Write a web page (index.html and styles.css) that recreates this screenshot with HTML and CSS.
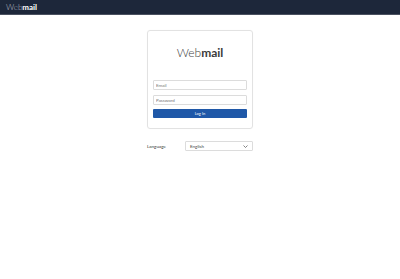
FILE: index.html
```html
<!DOCTYPE html>
<html>
<head>
<meta charset="utf-8">
<link rel="stylesheet" href="styles.css">
</head>
<body>
<header class="topbar">
  <div class="brand"><span class="light">Web</span><span class="bold">mail</span></div>
</header>
<main class="main">
  <div class="card">
    <h1 class="title"><span class="light">Web</span><span class="bold">mail</span></h1>
    <form class="form">
      <input class="field" type="text" placeholder="Email">
      <input class="field" type="password" placeholder="Password">
      <button class="btn" type="button">Log In</button>
    </form>
  </div>
  <div class="lang">
    <span class="lang-label">Language</span>
    <div class="select">
      <span>English</span>
      <svg class="chev" width="5" height="3" viewBox="0 0 5 3"><path d="M0.5 0.5 L2.5 2.5 L4.5 0.5" fill="none" stroke="#666" stroke-width="0.8"/></svg>
    </div>
  </div>
</main>
</body>
</html>
```
FILE: styles.css
```css
* { box-sizing: border-box; }
html, body { margin: 0; padding: 0; background: #fff; font-family: Lato, "Open Sans", sans-serif; }
.topbar {
  height: 15px;
  background: #1d273a;
  border-bottom: 1px solid #4a5160;
  display: flex;
  align-items: center;
  padding-left: 6px;
}
.brand { font-size: 8px; color: #fff; line-height: 1; }
.brand .light { font-weight: 300; color: #b9bdc6; }
.brand .bold { font-weight: 700; }
.main {
  width: 106px;
  margin: 15px auto 0;
}
.card {
  border: 1px solid #e2e2e2;
  border-radius: 3px;
  height: 99px;
  padding: 14px 5px 0;
  box-shadow: 0 0 1px rgba(0,0,0,0.05);
}
.title {
  margin: 0;
  text-align: center;
  font-size: 12px;
  line-height: 15px;
  color: #3a3a3a;
  font-weight: 400;
}
.title .light { font-weight: 300; }
.title .bold { font-weight: 700; }
.form { display: flex; flex-direction: column; margin-top: 20px; }
.field {
  height: 10px;
  border: 1px solid #dcdcdc;
  border-radius: 1px;
  font-family: Lato, sans-serif;
  font-size: 4.5px;
  padding: 0 2px;
  margin-bottom: 5px;
  outline: none;
}
.field::placeholder { color: #777; }
.btn {
  height: 9px;
  margin-top: -1px;
  background: #1f58a8;
  color: #fff;
  border: none;
  border-radius: 1px;
  font-family: Lato, sans-serif;
  font-size: 4px;
  padding: 0;
}
.lang {
  display: flex;
  align-items: center;
  margin-top: 12px;
}
.lang-label { font-size: 4.5px; color: #333; width: 38px; }
.select {
  flex: 1;
  height: 10px;
  border: 1px solid #dcdcdc;
  border-radius: 1px;
  display: flex;
  align-items: center;
  justify-content: space-between;
  padding: 0 4px 0 4px;
  font-size: 4.5px;
  color: #444;
}
```
